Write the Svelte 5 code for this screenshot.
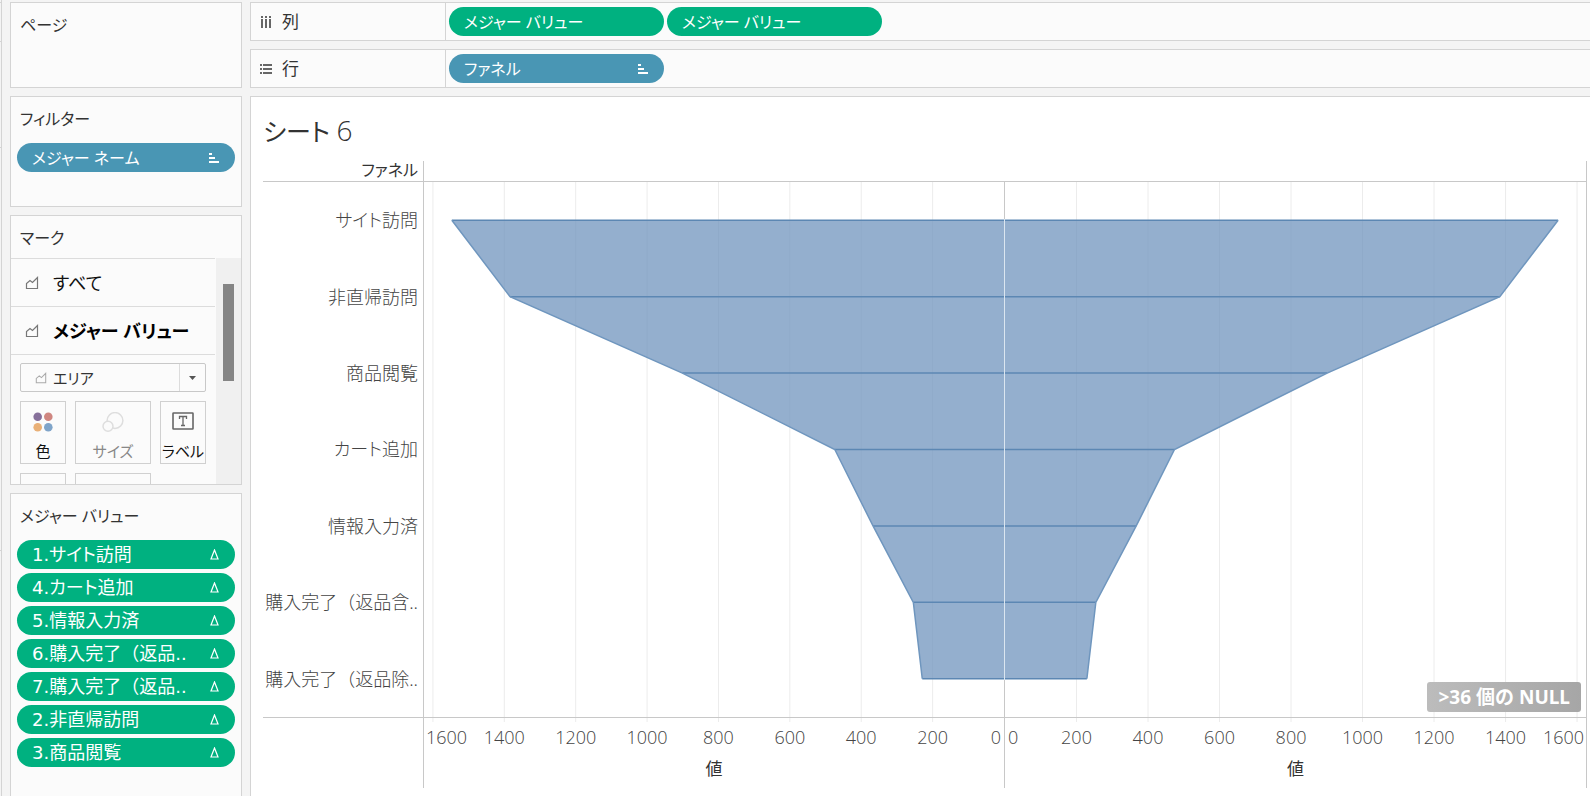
<script>
  const values = [1547, 1384, 901, 474, 367, 254, 229];
  const stages = ['サイト訪問', '非直帰訪問', '商品閲覧', 'カート追加', '情報入力済', '購入完了（返品含..', '購入完了（返品除..'];
  const measures = ['1.サイト訪問', '4.カート追加', '5.情報入力済', '6.購入完了（返品..', '7.購入完了（返品..', '2.非直帰訪問', '3.商品閲覧'];
  const ticks = [0, 200, 400, 600, 800, 1000, 1200, 1400, 1600];
  const domain = 1625;
  const rows = values.length;
  const panes = [{ id: 'left', flip: true }, { id: 'right', flip: false }];

  const px = (v, flip) => (flip ? domain - v : v);
  const py = (i) => i * 2 + 1;
  const area = (flip) =>
    `${px(0, flip)},1 ` + values.map((v, i) => `${px(v, flip)},${py(i)}`).join(' ') + ` ${px(0, flip)},${py(rows - 1)}`;
  const edge = (flip) => values.map((v, i) => `${px(v, flip)},${py(i)}`).join(' ');
  const pct = (v, flip) => (px(v, flip) / domain) * 100;
</script>

{#snippet areaIcon(size)}
  <svg class="area-icon" width={size} height={size} viewBox="0 0 14 14" aria-hidden="true">
    <path d="M1.5 12.5V7.5L5 4.5L7.5 6.5L12.5 1.5V12.5Z" fill="none" stroke="currentColor" stroke-width="1.2" />
  </svg>
{/snippet}

{#snippet sortIcon()}
  <svg width="10" height="10" viewBox="0 0 10 10" aria-hidden="true">
    <path d="M0 0h3v2H0zM0 4h6v2H0zM0 8h10v2H0z" fill="#fff" />
  </svg>
{/snippet}

<div class="app">
  <div class="rail"><div></div><div></div><div></div><div></div></div>

  <aside>
    <section class="card pages"><h2>ページ</h2></section>

    <section class="card filters">
      <h2>フィルター</h2>
      <button class="pill blue"><span>メジャー ネーム</span>{@render sortIcon()}</button>
    </section>

    <section class="card marks">
      <h2>マーク</h2>
      <div class="scroller">
        <div class="mark-body">
          <button class="layer">{@render areaIcon(14)}<span>すべて</span></button>
          <button class="layer active">{@render areaIcon(14)}<span>メジャー バリュー</span></button>
          <div class="mark-tools">
            <div class="type">
              {@render areaIcon(12)}
              <select aria-label="マーク"><option>エリア</option></select>
              <i><svg width="7" height="4" viewBox="0 0 7 4" aria-hidden="true"><path d="M0 0H7L3.5 4Z" fill="#555" /></svg></i>
            </div>
            <div class="tiles">
              <button class="tile">
                <svg width="20" height="20" viewBox="0 0 20 20" aria-hidden="true">
                  <circle cx="4.7" cy="4.7" r="4.3" fill="#86709a" /><circle cx="15.3" cy="4.7" r="4.3" fill="#cf8680" />
                  <circle cx="4.7" cy="15.3" r="4.3" fill="#e9b077" /><circle cx="15.3" cy="15.3" r="4.3" fill="#7fa4c9" />
                </svg>
                <span>色</span>
              </button>
              <button class="tile" disabled>
                <svg width="22" height="20" viewBox="0 0 22 20" fill="none" stroke="#dedede" stroke-width="1.5" aria-hidden="true">
                  <circle cx="13" cy="8.5" r="7.9" /><circle cx="6" cy="14.2" r="5" fill="#fbfbfb" />
                </svg>
                <span>サイズ</span>
              </button>
              <button class="tile">
                <svg width="22" height="18" viewBox="0 0 22 18" fill="none" stroke="#666" aria-hidden="true">
                  <rect x="1" y="1" width="20" height="16" rx="0.5" stroke-width="1.6" />
                  <path d="M7.5 7V4.5H14.5V7M11 4.5V13.5M9 13.5H13" stroke-width="1.3" />
                </svg>
                <span>ラベル</span>
              </button>
              <div class="tile"></div>
              <div class="tile"></div>
            </div>
          </div>
        </div>
        <div class="track"><div class="thumb"></div></div>
      </div>
    </section>

    <section class="card measures">
      <h2>メジャー バリュー</h2>
      {#each measures as m}
        <button class="pill green">
          <span class:full={m.includes('（')}>{m}</span>
          <svg width="9" height="11" viewBox="0 0 9 11" aria-hidden="true">
            <path d="M4.5 1L8 10H1Z" fill="none" stroke="#fff" stroke-width="1.2" />
          </svg>
        </button>
      {/each}
    </section>
  </aside>

  <main>
    <div class="shelf">
      <div class="shelf-name">
        <svg width="12" height="12" viewBox="0 0 12 12" fill="#666" aria-hidden="true">
          <path d="M1 0h2v2H1zM5 0h2v2H5zM9 0h2v2H9zM1 3h2v9H1zM5 3h2v9H5zM9 3h2v9H9z" />
        </svg>
        列
      </div>
      <div class="shelf-pills">
        <button class="pill green"><span>メジャー バリュー</span></button>
        <button class="pill green"><span>メジャー バリュー</span></button>
      </div>
    </div>
    <div class="shelf">
      <div class="shelf-name">
        <svg width="12" height="12" viewBox="0 0 12 12" fill="#666" aria-hidden="true">
          <path d="M0 1h2v2H0zM3 1h9v2H3zM0 5h2v2H0zM3 5h9v2H3zM0 9h2v2H0zM3 9h9v2H3z" />
        </svg>
        行
      </div>
      <div class="shelf-pills">
        <button class="pill blue"><span>ファネル</span>{@render sortIcon()}</button>
      </div>
    </div>

    <div class="sheet">
      <h1>シート <b>6</b></h1>
      <div class="viz">
        <div class="head corner">ファネル</div>
        <div class="head span"></div>
        <div class="labels">
          {#each stages as s}<div class:full={s.includes('（')}>{s}</div>{/each}
        </div>
        {#each panes as p}
          <div class="pane {p.id}">
            <svg viewBox="0 0 {domain} {rows * 2}" preserveAspectRatio="none" aria-hidden="true">
              {#each ticks.slice(1) as t}
                <line class="grid" x1={px(t, p.flip)} x2={px(t, p.flip)} y1="0" y2={rows * 2} />
              {/each}
              <polygon points={area(p.flip)} />
              {#each values as v, i}
                <line class="level" x1={px(0, p.flip)} x2={px(v, p.flip)} y1={py(i)} y2={py(i)} />
              {/each}
              <polyline points={edge(p.flip)} />
            </svg>
            {#if !p.flip}<button class="nulls">&gt;36 個の NULL</button>{/if}
          </div>
        {/each}
        <div class="foot"></div>
        {#each panes as p}
          <div class="axis {p.id}">
            <svg class="marks-row" viewBox="0 0 {domain} 4" preserveAspectRatio="none" aria-hidden="true">
              {#each ticks.slice(1) as t}
                <line class="grid" x1={px(t, p.flip)} x2={px(t, p.flip)} y1="0" y2="4" />
              {/each}
            </svg>
            <div class="ticks">
              {#each ticks as t}
                <span class:zero={t === 0} class:last={t === 1600} style="left: {pct(t, p.flip)}%">{t}</span>
              {/each}
            </div>
            <div class="axis-title">値</div>
          </div>
        {/each}
      </div>
    </div>
  </main>
</div>

<style>
  :global(body) {
    margin: 0;
    background: #f4f4f4;
  }
  .app {
    display: grid;
    grid-template-columns: 2px 232px minmax(0, 1fr);
    column-gap: 8px;
    height: 100vh;
    overflow: hidden;
    box-sizing: border-box;
    font-family: 'Noto Sans', 'Noto Sans CJK JP', sans-serif;
    font-feature-settings: 'palt';
    font-size: 17px;
    line-height: 24px;
    color: #333;
  }
  button, select {
    font: inherit;
    font-feature-settings: inherit;
    color: inherit;
    margin: 0;
    padding: 0;
    border: 0;
    background: none;
  }
  h1, h2 { margin: 0; font-weight: 400; }
  .full { font-feature-settings: normal; }
  .rail { display: flex; flex-direction: column; padding-top: 2px; border-right: 1px solid #d4d4d4; }
  .rail div { border-top: 1px solid #d4d4d4; height: 38px; }
  .rail div:nth-child(2) { height: 105px; }
  .rail div:nth-child(3) { height: 402px; }

  aside { display: flex; flex-direction: column; gap: 8px; padding-top: 2px; min-height: 0; }
  .card { box-sizing: border-box; flex: none; border: 1px solid #d4d4d4; background: #fbfbfb; padding: 10px 6px; }
  h2 { font-size: 16px; line-height: 24px; padding: 0 3px; }
  .pages { height: 86px; }
  .filters { height: 111px; }
  .filters .pill { margin-top: 12px; }
  .marks { height: 270px; padding: 10px 0 0; display: flex; flex-direction: column; }
  .marks h2 { padding: 0 9px 8px; }
  .measures { flex: 1 0 auto; display: flex; flex-direction: column; gap: 4px; border-bottom: 0; }
  .measures h2 { margin-bottom: 8px; }

  .pill {
    box-sizing: border-box;
    display: flex;
    align-items: center;
    justify-content: space-between;
    width: 100%;
    height: 29px;
    padding: 0 16px 0 15px;
    border-radius: 15px;
    color: #fff;
    font-size: 16px;
    white-space: nowrap;
  }
  .blue { background: #4996b4; }
  .green { background: #00b180; }
  .measures .pill { font-family: 'DejaVu Sans', 'Noto Sans CJK JP', sans-serif; font-size: 18px; }

  .scroller { flex: 1; min-height: 0; display: flex; gap: 1px; overflow: hidden; }
  .mark-body { flex: 1; }
  .layer {
    display: flex;
    align-items: center;
    gap: 14px;
    width: 100%;
    height: 48px;
    padding-left: 14px;
    border-top: 1px solid #dcdcdc;
    font-size: 18px;
    color: #111;
  }
  .active { font-weight: 700; color: #000; }
  .area-icon { color: #777; }
  .mark-tools { border-top: 1px solid #dcdcdc; padding: 8px 9px; }
  .type {
    display: flex;
    align-items: center;
    height: 27px;
    padding-left: 14px;
    border: 1px solid #c8c8c8;
    border-radius: 2px;
  }
  .type .area-icon { color: #aaa; }
  select { flex: 1; appearance: none; padding-left: 6px; font-size: 15px; }
  i { display: flex; align-items: center; justify-content: center; width: 25px; align-self: stretch; border-left: 1px solid #dcdcdc; }
  .tiles { display: grid; grid-template-columns: 46px 76px 46px; gap: 9px; padding-top: 9px; }
  .tile {
    box-sizing: border-box;
    display: flex;
    flex-direction: column;
    align-items: center;
    justify-content: space-between;
    height: 63px;
    padding-top: 10px;
    border: 1px solid #d0d0d0;
    font-size: 15px;
    color: #111;
    white-space: nowrap;
  }
  .tile:disabled { color: #888; }
  .track { width: 25px; padding-top: 26px; background: #f0f0f0; }
  .thumb { width: 11px; height: 97px; margin-left: 7px; background: #858585; }

  main { display: flex; flex-direction: column; gap: 8px; padding-top: 2px; min-height: 0; }
  .shelf { display: flex; height: 37px; border: 1px solid #d4d4d4; border-right: 0; background: #fbfbfb; }
  .shelf-name { box-sizing: border-box; display: flex; align-items: center; gap: 10px; width: 195px; padding-left: 9px; border-right: 1px solid #d4d4d4; }
  .shelf-pills { display: flex; align-items: center; gap: 3px; padding-left: 3px; }
  .shelf-pills .pill { width: 215px; }

  .sheet { flex: 1; min-height: 0; display: flex; flex-direction: column; background: #fff; border: 1px solid #d4d4d4; border-width: 1px 0 0 1px; padding: 16px 3px 8px 12px; }
  h1 { font-size: 25px; line-height: 36px; }
  h1 b { font-family: 'Open Sans', sans-serif; font-weight: 300; font-size: 28px; line-height: 28px; }
  .viz {
    flex: 1;
    min-height: 0;
    display: grid;
    grid-template-columns: 161px minmax(0, 1fr) minmax(0, 1fr);
    grid-template-rows: 21px minmax(0, 1fr) 71px;
    margin-top: 12px;
    border-right: 1px solid #c8c8c8;
  }
  .head { border-bottom: 1px solid #c8c8c8; }
  .corner { text-align: right; padding-right: 5px; font-size: 16px; line-height: 18px; border-right: 1px solid #c8c8c8; }
  .span { grid-column: span 2; }
  .labels { display: flex; flex-direction: column; border-right: 1px solid #c8c8c8; }
  .labels div { flex: 1; display: flex; align-items: center; justify-content: flex-end; padding-right: 5px; font-size: 18px; font-weight: 300; color: #444; white-space: nowrap; }
  .pane { position: relative; min-height: 0; }
  .pane.left, .axis.left { border-right: 1px solid #c8c8c8; }
  .pane.left { border-image: linear-gradient(#c8c8c8 7%, #dbe6f0 7% 93%, #c8c8c8 93%) 1; }
  .pane svg { display: block; width: 100%; height: 100%; }
  line, polyline { vector-effect: non-scaling-stroke; }
  .grid { stroke: #ececec; stroke-width: 1; }
  .pane polygon { fill: #7094bd; fill-opacity: 0.75; }
  .level { stroke: #5c87b3; stroke-width: 1.5; }
  polyline { fill: none; stroke: #6f96be; stroke-width: 1.5; }
  .nulls {
    position: absolute;
    right: 5px;
    bottom: 5px;
    height: 30px;
    padding: 0 11px;
    border-radius: 3px;
    background: linear-gradient(90deg, #bcbcbc, #a6a6a6);
    color: #fff;
    font-feature-settings: normal;
    font-size: 19px;
    font-weight: 700;
    white-space: nowrap;
  }
  .foot { border-top: 1px solid #c8c8c8; border-right: 1px solid #c8c8c8; }
  .axis { border-top: 1px solid #c8c8c8; }
  .marks-row { display: block; width: 100%; height: 4px; }
  .ticks { position: relative; height: 35px; font-family: 'Open Sans', sans-serif; font-size: 18px; font-weight: 300; color: #444; }
  .ticks span { position: absolute; top: 3px; transform: translateX(-50%); }
  .right .zero { transform: translateX(3px); }
  .left .zero { transform: translateX(-100%) translateX(-3px); }
  .left .last { transform: translateX(-7px); }
  .right .last { transform: translateX(-100%) translateX(7px); }
  .axis-title { text-align: center; }
</style>
